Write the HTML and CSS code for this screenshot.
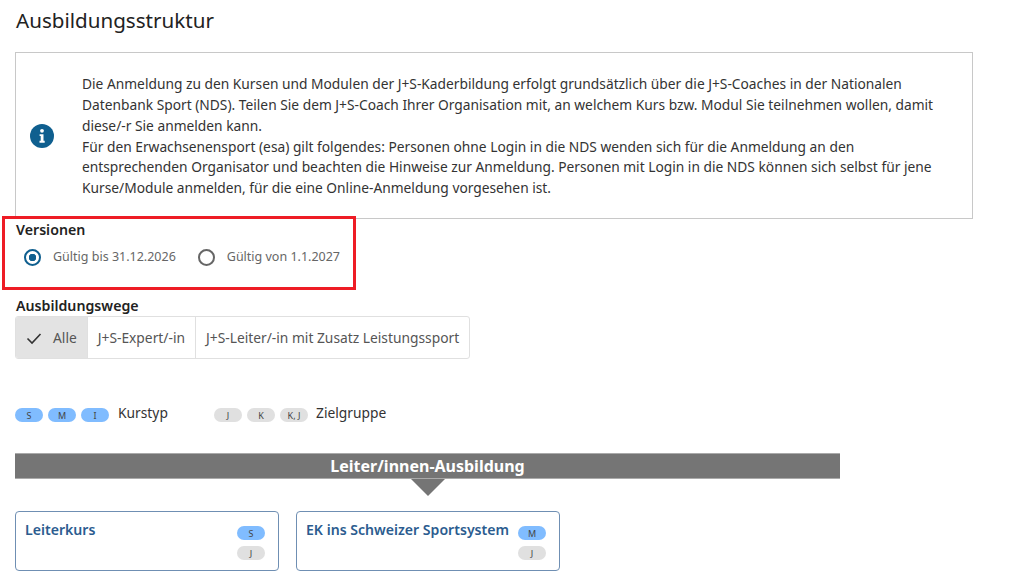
FILE: index.html
```html
<!DOCTYPE html>
<html lang="en">
<head>
    <meta charset="UTF-8">
    <meta name="viewport" content="width=device-width, initial-scale=1.0">
    <title>Ausbildungsstruktur</title>
    <link rel="stylesheet" href="styles.css">
</head>
<body>
    <div class="page">
        <h1>Ausbildungsstruktur</h1>

        <div class="info-box">
            <svg class="info-icon" viewBox="0 0 24 24" width="24" height="24">
                <circle cx="12" cy="12" r="12" fill="#0f5f8f"/>
                <circle cx="12" cy="6.8" r="1.9" fill="#fff"/>
                <path d="M9.6 10.2h3.9v6.6h1.2v1.9H9.5v-1.9h1.2v-4.7H9.6z" fill="#fff"/>
            </svg>
            <p>Die Anmeldung zu den Kursen und Modulen der J+S-Kaderbildung erfolgt grundsätzlich über die J+S-Coaches in der Nationalen Datenbank Sport (NDS). Teilen Sie dem J+S-Coach Ihrer Organisation mit, an welchem Kurs bzw. Modul Sie teilnehmen wollen, damit diese/-r Sie anmelden kann.<br>Für den Erwachsenensport (esa) gilt folgendes: Personen ohne Login in die NDS wenden sich für die Anmeldung an den entsprechenden Organisator und beachten die Hinweise zur Anmeldung. Personen mit Login in die NDS können sich selbst für jene Kurse/Module anmelden, für die eine Online-Anmeldung vorgesehen ist.</p>
        </div>

        <div class="versions">
            <div class="highlight"></div>
            <div class="field-label">Versionen</div>
            <div class="radio-row">
                <div class="radio">
                    <span class="radio-dot checked"></span>
                    <span>Gültig bis 31.12.2026</span>
                </div>
                <div class="radio">
                    <span class="radio-dot"></span>
                    <span>Gültig von 1.1.2027</span>
                </div>
            </div>
        </div>

        <div class="field-label">Ausbildungswege</div>
        <div class="button-group">
            <div class="group-item active">
                <svg viewBox="0 0 16 16" width="16" height="16">
                    <path d="M1.5 8.5l4.5 4.5L14.5 4" fill="none" stroke="#333" stroke-width="1.6"/>
                </svg>
                Alle
            </div>
            <div class="group-item">J+S-Expert/-in</div>
            <div class="group-item">J+S-Leiter/-in mit Zusatz Leistungssport</div>
        </div>

        <div class="legend">
            <div class="legend-part kurstyp">
                <span class="pill blue">S</span>
                <span class="pill blue">M</span>
                <span class="pill blue">I</span>
                <span class="legend-label">Kurstyp</span>
            </div>
            <div class="legend-part">
                <span class="pill grey">J</span>
                <span class="pill grey">K</span>
                <span class="pill grey">K, J</span>
                <span class="legend-label">Zielgruppe</span>
            </div>
        </div>

        <div class="section-bar">Leiter/innen-Ausbildung</div>
        <div class="bar-arrow"></div>

        <div class="cards">
            <div class="card">
                <div class="card-title">Leiterkurs</div>
                <div class="card-pills">
                    <span class="pill blue">S</span>
                    <span class="pill grey">J</span>
                </div>
            </div>
            <div class="card">
                <div class="card-title">EK ins Schweizer Sportsystem</div>
                <div class="card-pills">
                    <span class="pill blue">M</span>
                    <span class="pill grey">J</span>
                </div>
            </div>
        </div>
    </div>
</body>
</html>
```

FILE: styles.css
```css
html, body {
    margin: 0;
    height: 576px;
    overflow: hidden;
    background-color: white;
}
body {
    font-family: 'Noto Sans', sans-serif;
    color: #333;
}
.page {
    padding: 0 51px 0 15px;
}
h1 {
    margin: 0;
    padding: 6px 0 0 1px;
    height: 52px;
    box-sizing: border-box;
    font-size: 20.6px;
    line-height: 28px;
    font-weight: 400;
    color: #222;
}
.info-box {
    display: flex;
    align-items: center;
    height: 167px;
    box-sizing: border-box;
    border: 1px solid #c8c8c8;
    padding: 0 30px 0 14px;
}
.info-icon {
    flex: none;
    margin-right: 28px;
}
.info-box p {
    margin: 0;
    padding-top: 2px;
    font-size: 13.78px;
    line-height: 20.7px;
    color: #333;
}
.versions {
    position: relative;
    height: 77px;
    padding-top: 1px;
    box-sizing: border-box;
}
.highlight {
    position: absolute;
    left: -13px;
    top: -3px;
    width: 354px;
    height: 74px;
    box-sizing: border-box;
    border: 3px solid #ee1c25;
}
.field-label {
    padding-left: 1px;
    font-size: 14.2px;
    line-height: 20px;
    font-weight: 600;
    color: #222;
}
.radio-row {
    display: flex;
    gap: 22px;
    margin-top: 8px;
    padding-left: 9px;
}
.radio {
    display: flex;
    align-items: center;
    gap: 12px;
    font-size: 12.5px;
    line-height: 18px;
    color: #666;
}
.radio-dot {
    width: 17px;
    height: 17px;
    box-sizing: border-box;
    border: 2px solid #666;
    border-radius: 50%;
}
.radio-dot.checked {
    border-color: #0f5f8f;
    background: radial-gradient(circle, #0f5f8f 0 3.5px, white 4px);
}
.button-group {
    display: flex;
    width: fit-content;
    height: 43px;
    box-sizing: border-box;
    border: 1px solid #e0e0e0;
    border-radius: 3px;
    overflow: hidden;
}
.group-item {
    display: flex;
    align-items: center;
    gap: 11px;
    padding: 0 10px;
    font-size: 13.8px;
    color: #555;
    border-left: 1px solid #e0e0e0;
}
.group-item:first-child {
    border-left: none;
}
.group-item.active {
    background-color: #e3e3e3;
}
.legend {
    display: flex;
    margin-top: 46px;
    height: 20px;
    align-items: center;
}
.legend-part {
    display: flex;
    align-items: center;
    gap: 5px;
}
.kurstyp {
    width: 199px;
}
.legend-label {
    margin: 0 0 6px 3px;
    font-size: 13.8px;
    color: #333;
}
.kurstyp .legend-label {
    margin-left: 4px;
}
.pill {
    display: inline-flex;
    align-items: center;
    justify-content: center;
    width: 28px;
    height: 14px;
    border-radius: 7px;
    font-size: 9px;
    color: #444;
}
.pill.blue {
    background-color: #80bcff;
}
.pill.grey {
    background-color: #e0e0e0;
}
.section-bar {
    margin-top: 28px;
    width: 825px;
    height: 26px;
    box-sizing: border-box;
    border: 1px solid #aaa;
    border-width: 1px 0;
    background-color: #757575;
    color: white;
    font-size: 16px;
    font-weight: 700;
    line-height: 25px;
    text-align: center;
}
.bar-arrow {
    width: 0;
    margin-left: 396px;
    border-left: 17px solid transparent;
    border-right: 17px solid transparent;
    border-top: 17px solid #757575;
}
.cards {
    display: flex;
    gap: 17px;
    margin-top: 15px;
}
.card {
    display: flex;
    justify-content: space-between;
    width: 264px;
    height: 60px;
    box-sizing: border-box;
    padding: 8px 13px 0 9px;
    border: 1px solid #6f8fb3;
    border-radius: 4px;
}
.card-title {
    font-size: 14.1px;
    line-height: 20px;
    font-weight: 600;
    color: #2b5c8f;
}
.card-pills {
    display: flex;
    flex-direction: column;
    gap: 6px;
    padding-top: 6px;
}
```
